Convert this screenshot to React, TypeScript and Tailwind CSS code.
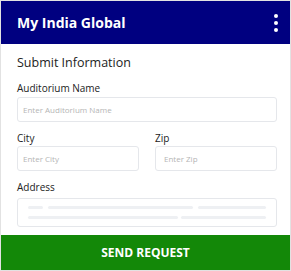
import React from "react";

export default function App() {
  const font = { fontFamily: '"Open Sans", "Noto Sans", sans-serif' };
  return (
    <div className="w-[291px] h-[271px] bg-white" style={font}>
      <div className="w-[291px] h-[271px] border border-[#e2e2e2] flex flex-col bg-white">
        <div className="h-[43px] bg-[#000080] flex items-center justify-between pl-4 pr-[12px]">
          <span className="text-white text-[14px] font-bold leading-none">My India Global</span>
          <div className="flex flex-col gap-[3px] items-center">
            <span className="w-[4px] h-[4px] rounded-full bg-white" />
            <span className="w-[4px] h-[4px] rounded-full bg-white" />
            <span className="w-[4px] h-[4px] rounded-full bg-white" />
          </div>
        </div>
        <div className="flex-1 pl-4 pr-[13px] pt-[9px]">
          <div className="text-[12.5px] leading-[20px] text-[#222]">Submit Information</div>
          <div className="mt-[8px] text-[10px] leading-[14px] text-[#222]">Auditorium Name</div>
          <div className="mt-[2px] h-[25px] border border-[#e5e7eb] rounded-[3px] flex items-center px-[5px] text-[8px] text-[#b5b5b5]">
            Enter Auditorium Name
          </div>
          <div className="mt-[9px] flex gap-[16px]">
            <div className="flex-1">
              <div className="text-[10px] leading-[14px] text-[#222]">City</div>
              <div className="mt-[1px] h-[25px] border border-[#e5e7eb] rounded-[3px] flex items-center px-[5px] text-[8px] text-[#b5b5b5]">
                Enter City
              </div>
            </div>
            <div className="flex-1">
              <div className="text-[10px] leading-[14px] text-[#222]">Zip</div>
              <div className="mt-[1px] h-[25px] border border-[#e5e7eb] rounded-[3px] flex items-center px-[8px] text-[8px] text-[#b5b5b5]">
                Enter Zip
              </div>
            </div>
          </div>
          <div className="mt-[9px] text-[10px] leading-[14px] text-[#222]">Address</div>
          <div className="mt-[4px] h-[29px] border border-[#e5e7eb] rounded-[3px] px-[10px] flex flex-col justify-center gap-[7px]">
            <div className="flex gap-[5px]">
              <span className="w-[15px] h-[3px] rounded-full bg-[#eef0f3]" />
              <span className="w-[145px] h-[3px] rounded-full bg-[#eef0f3]" />
              <span className="flex-1 h-[3px] rounded-full bg-[#eef0f3]" />
            </div>
            <div className="flex gap-[3px]">
              <span className="w-[150px] h-[3px] rounded-full bg-[#eef0f3]" />
              <span className="flex-1 h-[3px] rounded-full bg-[#eef0f3]" />
            </div>
          </div>
        </div>
        <div className="h-[35px] bg-[#138808] flex items-center justify-center text-white text-[12px] font-bold">
          SEND REQUEST
        </div>
      </div>
    </div>
  );
}
